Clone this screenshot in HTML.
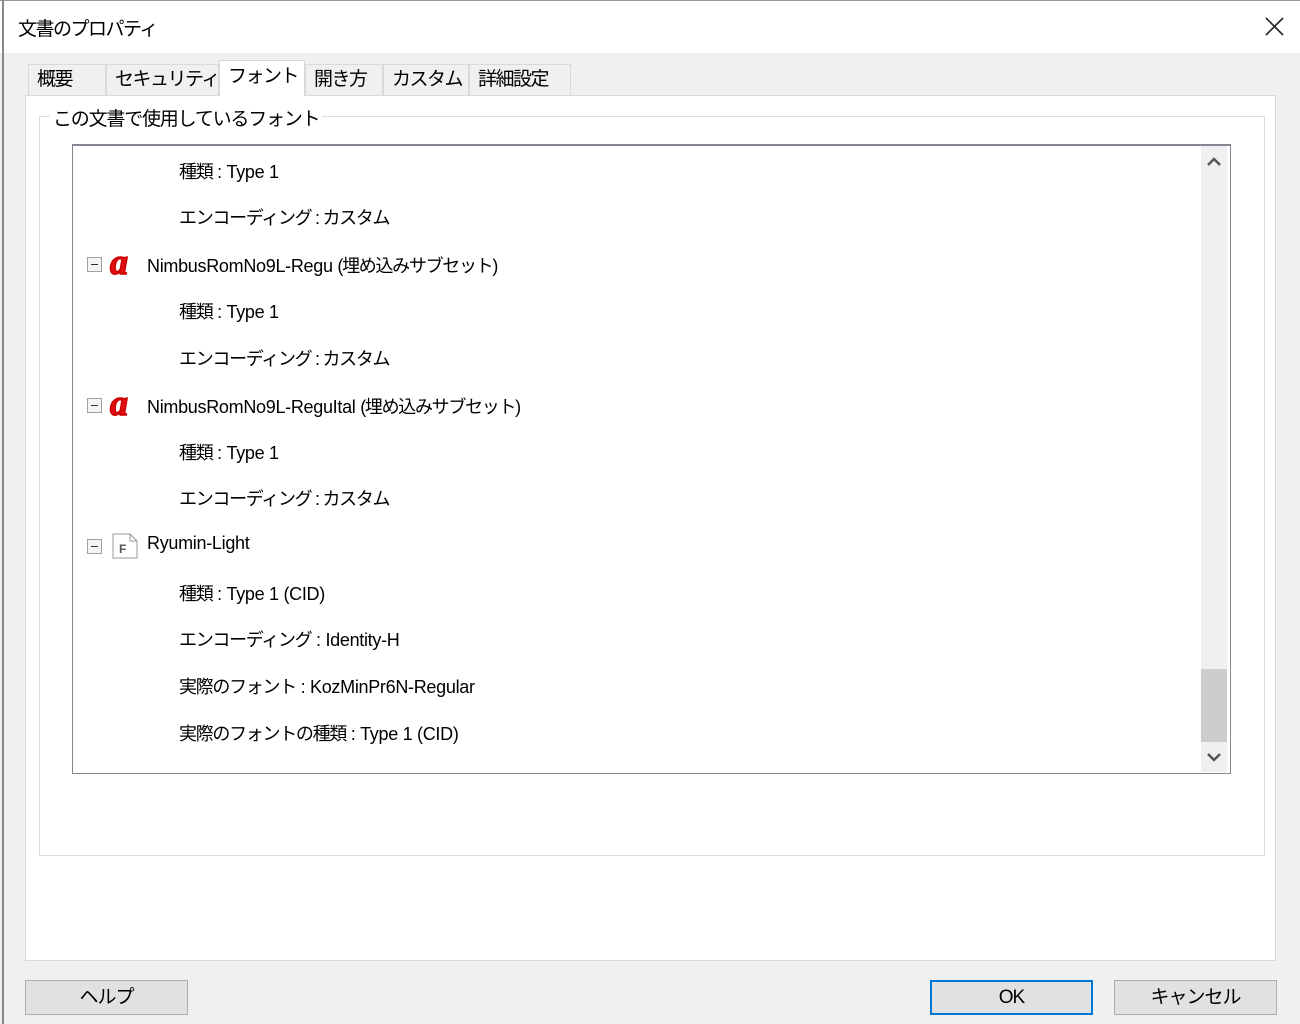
<!DOCTYPE html>
<html><head><meta charset="utf-8"><style>
*{margin:0;padding:0;box-sizing:border-box}
body{width:1300px;height:1024px;background:#f0f0f0;position:relative;overflow:hidden;font-family:"Liberation Sans","Noto Sans CJK JP",sans-serif;color:#000;font-size:17px}
.abs{position:absolute}
#title{left:0;top:0;width:1300px;height:53px;background:#fff;border-top:1px solid #999}
#lb{left:2px;top:0;width:2px;height:1024px;background:#888}
.tab{position:absolute;top:64px;height:31px;background:#f0f0f0;border:1px solid #d9d9d9;border-bottom:none;font-size:19px;line-height:29px;padding-left:8px;white-space:nowrap;letter-spacing:-1.5px;overflow:hidden}
#panel{left:25px;top:95px;width:1251px;height:866px;background:#fff;border:1px solid #d9d9d9}
#grp{left:39px;top:116px;width:1226px;height:740px;border:1px solid #dcdcdc}
#legend{left:50px;top:104px;background:#fff;padding:0 3px;font-size:19px;letter-spacing:-1.2px;white-space:nowrap}
#list{left:72px;top:144px;width:1159px;height:630px;border:1px solid #828790;border-top:2px solid #828790;background:#fff}
#sb{left:1201px;top:146px;width:26px;height:626px;background:#f0f0f0}
#thumb{left:1201px;top:669px;width:26px;height:73px;background:#cdcdcd}
.row{position:absolute;white-space:nowrap;font-size:18px;letter-spacing:-0.3px}
.j{letter-spacing:-1.3px}
.exp{position:absolute;width:15px;height:15px;border:1px solid #a0a0a0;background:#f4f4f4}
.exp:after{content:"";position:absolute;left:3px;top:6px;width:7px;height:1px;background:#333}
.btn{position:absolute;top:980px;height:35px;width:163px;background:#e1e1e1;border:1px solid #adadad;text-align:center;line-height:33px;font-size:19px;letter-spacing:-1px}
</style></head><body>
<div id="title" class="abs"></div>
<div class="abs" style="left:18px;top:14px;font-size:19px;letter-spacing:-1.5px">文書のプロパティ</div>
<svg class="abs" style="left:1264px;top:16px" width="21" height="21"><path d="M2 2L19 19M19 2L2 19" stroke="#222" stroke-width="1.6"/></svg>
<div id="lb" class="abs"></div>
<div id="panel" class="abs"></div>
<div class="tab" style="left:28px;width:78px">概要</div>
<div class="tab" style="left:106px;width:113px">セキュリティ</div>
<div class="tab" style="left:219px;width:86px;top:60px;height:36px;background:#fff;z-index:2;line-height:32px">フォント</div>
<div class="tab" style="left:305px;width:78px">開き方</div>
<div class="tab" style="left:383px;width:86px">カスタム</div>
<div class="tab" style="left:469px;width:102px">詳細設定</div>
<div id="grp" class="abs"></div>
<div id="legend" class="abs">この文書で使用しているフォント</div>
<div id="list" class="abs"></div>
<div id="sb" class="abs"></div>
<div id="thumb" class="abs"></div>
<svg class="abs" style="left:1206px;top:156px" width="16" height="12"><path d="M2 9L8 3L14 9" stroke="#555" stroke-width="2.5" fill="none"/></svg>
<svg class="abs" style="left:1206px;top:751px" width="16" height="12"><path d="M2 3L8 9L14 3" stroke="#555" stroke-width="2.5" fill="none"/></svg>

<div class="row" style="left:179px;top:158px"><span class="j">種類</span> : Type 1</div>
<div class="row j" style="left:179px;top:204px">エンコーディング : カスタム</div>
<div class="exp" style="left:87px;top:257px"></div>
<svg class="abs" style="left:108px;top:246px" width="34" height="34"><text x="2" y="28" font-family="Liberation Serif" font-style="italic" font-weight="bold" font-size="36" fill="#e01010" stroke="#c00" stroke-width="1.5">a</text></svg>
<div class="row" style="left:147px;top:252px">NimbusRomNo9L-Regu <span class="j">(埋め込みサブセット)</span></div>
<div class="row" style="left:179px;top:298px"><span class="j">種類</span> : Type 1</div>
<div class="row j" style="left:179px;top:345px">エンコーディング : カスタム</div>
<div class="exp" style="left:87px;top:398px"></div>
<svg class="abs" style="left:108px;top:387px" width="34" height="34"><text x="2" y="28" font-family="Liberation Serif" font-style="italic" font-weight="bold" font-size="36" fill="#e01010" stroke="#c00" stroke-width="1.5">a</text></svg>
<div class="row" style="left:147px;top:393px">NimbusRomNo9L-ReguItal <span class="j">(埋め込みサブセット)</span></div>
<div class="row" style="left:179px;top:439px"><span class="j">種類</span> : Type 1</div>
<div class="row j" style="left:179px;top:485px">エンコーディング : カスタム</div>
<div class="exp" style="left:87px;top:539px"></div>
<svg class="abs" style="left:111px;top:532px" width="28" height="28"><path d="M2 2H19L26 9V26H2Z" fill="#fff" stroke="#999"/><path d="M19 2V9H26" fill="none" stroke="#999"/><text x="8" y="21" font-family="Liberation Sans" font-weight="bold" font-size="12" fill="#555">F</text></svg>
<div class="row" style="left:147px;top:533px">Ryumin-Light</div>
<div class="row" style="left:179px;top:580px"><span class="j">種類</span> : Type 1 (CID)</div>
<div class="row" style="left:179px;top:626px"><span class="j">エンコーディング</span> : Identity-H</div>
<div class="row" style="left:179px;top:673px"><span class="j">実際のフォント</span> : KozMinPr6N-Regular</div>
<div class="row" style="left:179px;top:720px"><span class="j">実際のフォントの種類</span> : Type 1 (CID)</div>

<div class="btn" style="left:25px">ヘルプ</div>
<div class="btn" style="left:930px;border:2px solid #0078d7;line-height:31px">OK</div>
<div class="btn" style="left:1114px">キャンセル</div>
</body></html>
